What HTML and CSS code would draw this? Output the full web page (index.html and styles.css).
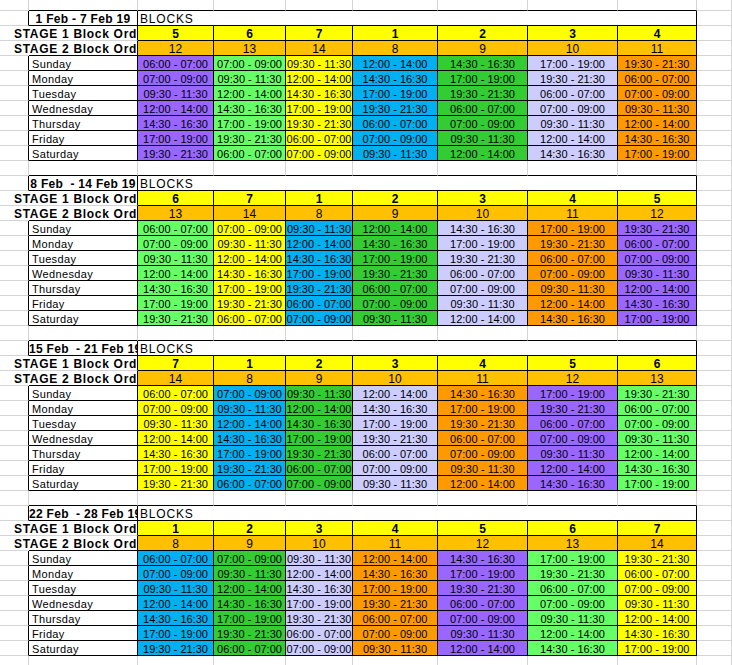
FILE: index.html
```html
<!DOCTYPE html>
<html>
<head>
<meta charset="utf-8">
<title>Block schedule</title>
<link rel="stylesheet" href="styles.css">
</head>
<body>
<table class="sheet">
<colgroup>
<col class="ca"><col class="cb"><col class="cc"><col class="cd"><col class="ce"><col class="cf"><col class="cg"><col class="ch"><col class="ci"><col class="cj">
</colgroup>
<tbody>
<tr class="r0"><td></td><td class="bb"></td><td class="bb"></td><td class="bb"></td><td class="bb"></td><td class="bb"></td><td class="bb"></td><td class="bb"></td><td class="bb"></td><td></td></tr>

<tr><td class="br"></td><td class="box ttl">1 Feb - 7 Feb 19</td><td class="box blk" colspan="7">BLOCKS</td><td></td></tr>
<tr><td class="lblcell"><div class="lbl">STAGE 1 Block Ord</div></td><td class="br"></td><td class="box st1">5</td><td class="box st1">6</td><td class="box st1">7</td><td class="box st1">1</td><td class="box st1">2</td><td class="box st1">3</td><td class="box st1">4</td><td></td></tr>
<tr><td class="lblcell"><div class="lbl">STAGE 2 Block Ord</div></td><td class="box"></td><td class="box st2">12</td><td class="box st2">13</td><td class="box st2">14</td><td class="box st2">8</td><td class="box st2">9</td><td class="box st2">10</td><td class="box st2">11</td><td></td></tr>
<tr><td class="br"></td><td class="box day">Sunday</td><td class="box t k5">06:00 - 07:00</td><td class="box t k6">07:00 - 09:00</td><td class="box t k7">09:30 - 11:30</td><td class="box t k1">12:00 - 14:00</td><td class="box t k2">14:30 - 16:30</td><td class="box t k3">17:00 - 19:00</td><td class="box t k4">19:30 - 21:30</td><td></td></tr>
<tr><td class="br"></td><td class="box day">Monday</td><td class="box t k5">07:00 - 09:00</td><td class="box t k6">09:30 - 11:30</td><td class="box t k7">12:00 - 14:00</td><td class="box t k1">14:30 - 16:30</td><td class="box t k2">17:00 - 19:00</td><td class="box t k3">19:30 - 21:30</td><td class="box t k4">06:00 - 07:00</td><td></td></tr>
<tr><td class="br"></td><td class="box day">Tuesday</td><td class="box t k5">09:30 - 11:30</td><td class="box t k6">12:00 - 14:00</td><td class="box t k7">14:30 - 16:30</td><td class="box t k1">17:00 - 19:00</td><td class="box t k2">19:30 - 21:30</td><td class="box t k3">06:00 - 07:00</td><td class="box t k4">07:00 - 09:00</td><td></td></tr>
<tr><td class="br"></td><td class="box day">Wednesday</td><td class="box t k5">12:00 - 14:00</td><td class="box t k6">14:30 - 16:30</td><td class="box t k7">17:00 - 19:00</td><td class="box t k1">19:30 - 21:30</td><td class="box t k2">06:00 - 07:00</td><td class="box t k3">07:00 - 09:00</td><td class="box t k4">09:30 - 11:30</td><td></td></tr>
<tr><td class="br"></td><td class="box day">Thursday</td><td class="box t k5">14:30 - 16:30</td><td class="box t k6">17:00 - 19:00</td><td class="box t k7">19:30 - 21:30</td><td class="box t k1">06:00 - 07:00</td><td class="box t k2">07:00 - 09:00</td><td class="box t k3">09:30 - 11:30</td><td class="box t k4">12:00 - 14:00</td><td></td></tr>
<tr><td class="br"></td><td class="box day">Friday</td><td class="box t k5">17:00 - 19:00</td><td class="box t k6">19:30 - 21:30</td><td class="box t k7">06:00 - 07:00</td><td class="box t k1">07:00 - 09:00</td><td class="box t k2">09:30 - 11:30</td><td class="box t k3">12:00 - 14:00</td><td class="box t k4">14:30 - 16:30</td><td></td></tr>
<tr><td class="br"></td><td class="box day">Saturday</td><td class="box t k5">19:30 - 21:30</td><td class="box t k6">06:00 - 07:00</td><td class="box t k7">07:00 - 09:00</td><td class="box t k1">09:30 - 11:30</td><td class="box t k2">12:00 - 14:00</td><td class="box t k3">14:30 - 16:30</td><td class="box t k4">17:00 - 19:00</td><td></td></tr>
<tr><td></td><td class="bb"></td><td class="bb"></td><td class="bb"></td><td class="bb"></td><td class="bb"></td><td class="bb"></td><td class="bb"></td><td class="bb"></td><td></td></tr>

<tr><td class="br"></td><td class="box ttl">8 Feb  - 14 Feb 19</td><td class="box blk" colspan="7">BLOCKS</td><td></td></tr>
<tr><td class="lblcell"><div class="lbl">STAGE 1 Block Ord</div></td><td class="br"></td><td class="box st1">6</td><td class="box st1">7</td><td class="box st1">1</td><td class="box st1">2</td><td class="box st1">3</td><td class="box st1">4</td><td class="box st1">5</td><td></td></tr>
<tr><td class="lblcell"><div class="lbl">STAGE 2 Block Ord</div></td><td class="box"></td><td class="box st2">13</td><td class="box st2">14</td><td class="box st2">8</td><td class="box st2">9</td><td class="box st2">10</td><td class="box st2">11</td><td class="box st2">12</td><td></td></tr>
<tr><td class="br"></td><td class="box day">Sunday</td><td class="box t k6">06:00 - 07:00</td><td class="box t k7">07:00 - 09:00</td><td class="box t k1">09:30 - 11:30</td><td class="box t k2">12:00 - 14:00</td><td class="box t k3">14:30 - 16:30</td><td class="box t k4">17:00 - 19:00</td><td class="box t k5">19:30 - 21:30</td><td></td></tr>
<tr><td class="br"></td><td class="box day">Monday</td><td class="box t k6">07:00 - 09:00</td><td class="box t k7">09:30 - 11:30</td><td class="box t k1">12:00 - 14:00</td><td class="box t k2">14:30 - 16:30</td><td class="box t k3">17:00 - 19:00</td><td class="box t k4">19:30 - 21:30</td><td class="box t k5">06:00 - 07:00</td><td></td></tr>
<tr><td class="br"></td><td class="box day">Tuesday</td><td class="box t k6">09:30 - 11:30</td><td class="box t k7">12:00 - 14:00</td><td class="box t k1">14:30 - 16:30</td><td class="box t k2">17:00 - 19:00</td><td class="box t k3">19:30 - 21:30</td><td class="box t k4">06:00 - 07:00</td><td class="box t k5">07:00 - 09:00</td><td></td></tr>
<tr><td class="br"></td><td class="box day">Wednesday</td><td class="box t k6">12:00 - 14:00</td><td class="box t k7">14:30 - 16:30</td><td class="box t k1">17:00 - 19:00</td><td class="box t k2">19:30 - 21:30</td><td class="box t k3">06:00 - 07:00</td><td class="box t k4">07:00 - 09:00</td><td class="box t k5">09:30 - 11:30</td><td></td></tr>
<tr><td class="br"></td><td class="box day">Thursday</td><td class="box t k6">14:30 - 16:30</td><td class="box t k7">17:00 - 19:00</td><td class="box t k1">19:30 - 21:30</td><td class="box t k2">06:00 - 07:00</td><td class="box t k3">07:00 - 09:00</td><td class="box t k4">09:30 - 11:30</td><td class="box t k5">12:00 - 14:00</td><td></td></tr>
<tr><td class="br"></td><td class="box day">Friday</td><td class="box t k6">17:00 - 19:00</td><td class="box t k7">19:30 - 21:30</td><td class="box t k1">06:00 - 07:00</td><td class="box t k2">07:00 - 09:00</td><td class="box t k3">09:30 - 11:30</td><td class="box t k4">12:00 - 14:00</td><td class="box t k5">14:30 - 16:30</td><td></td></tr>
<tr><td class="br"></td><td class="box day">Saturday</td><td class="box t k6">19:30 - 21:30</td><td class="box t k7">06:00 - 07:00</td><td class="box t k1">07:00 - 09:00</td><td class="box t k2">09:30 - 11:30</td><td class="box t k3">12:00 - 14:00</td><td class="box t k4">14:30 - 16:30</td><td class="box t k5">17:00 - 19:00</td><td></td></tr>
<tr><td></td><td class="bb"></td><td class="bb"></td><td class="bb"></td><td class="bb"></td><td class="bb"></td><td class="bb"></td><td class="bb"></td><td class="bb"></td><td></td></tr>

<tr><td class="br"></td><td class="box ttl">15 Feb  - 21 Feb 19</td><td class="box blk" colspan="7">BLOCKS</td><td></td></tr>
<tr><td class="lblcell"><div class="lbl">STAGE 1 Block Ord</div></td><td class="br"></td><td class="box st1">7</td><td class="box st1">1</td><td class="box st1">2</td><td class="box st1">3</td><td class="box st1">4</td><td class="box st1">5</td><td class="box st1">6</td><td></td></tr>
<tr><td class="lblcell"><div class="lbl">STAGE 2 Block Ord</div></td><td class="box"></td><td class="box st2">14</td><td class="box st2">8</td><td class="box st2">9</td><td class="box st2">10</td><td class="box st2">11</td><td class="box st2">12</td><td class="box st2">13</td><td></td></tr>
<tr><td class="br"></td><td class="box day">Sunday</td><td class="box t k7">06:00 - 07:00</td><td class="box t k1">07:00 - 09:00</td><td class="box t k2">09:30 - 11:30</td><td class="box t k3">12:00 - 14:00</td><td class="box t k4">14:30 - 16:30</td><td class="box t k5">17:00 - 19:00</td><td class="box t k6">19:30 - 21:30</td><td></td></tr>
<tr><td class="br"></td><td class="box day">Monday</td><td class="box t k7">07:00 - 09:00</td><td class="box t k1">09:30 - 11:30</td><td class="box t k2">12:00 - 14:00</td><td class="box t k3">14:30 - 16:30</td><td class="box t k4">17:00 - 19:00</td><td class="box t k5">19:30 - 21:30</td><td class="box t k6">06:00 - 07:00</td><td></td></tr>
<tr><td class="br"></td><td class="box day">Tuesday</td><td class="box t k7">09:30 - 11:30</td><td class="box t k1">12:00 - 14:00</td><td class="box t k2">14:30 - 16:30</td><td class="box t k3">17:00 - 19:00</td><td class="box t k4">19:30 - 21:30</td><td class="box t k5">06:00 - 07:00</td><td class="box t k6">07:00 - 09:00</td><td></td></tr>
<tr><td class="br"></td><td class="box day">Wednesday</td><td class="box t k7">12:00 - 14:00</td><td class="box t k1">14:30 - 16:30</td><td class="box t k2">17:00 - 19:00</td><td class="box t k3">19:30 - 21:30</td><td class="box t k4">06:00 - 07:00</td><td class="box t k5">07:00 - 09:00</td><td class="box t k6">09:30 - 11:30</td><td></td></tr>
<tr><td class="br"></td><td class="box day">Thursday</td><td class="box t k7">14:30 - 16:30</td><td class="box t k1">17:00 - 19:00</td><td class="box t k2">19:30 - 21:30</td><td class="box t k3">06:00 - 07:00</td><td class="box t k4">07:00 - 09:00</td><td class="box t k5">09:30 - 11:30</td><td class="box t k6">12:00 - 14:00</td><td></td></tr>
<tr><td class="br"></td><td class="box day">Friday</td><td class="box t k7">17:00 - 19:00</td><td class="box t k1">19:30 - 21:30</td><td class="box t k2">06:00 - 07:00</td><td class="box t k3">07:00 - 09:00</td><td class="box t k4">09:30 - 11:30</td><td class="box t k5">12:00 - 14:00</td><td class="box t k6">14:30 - 16:30</td><td></td></tr>
<tr><td class="br"></td><td class="box day">Saturday</td><td class="box t k7">19:30 - 21:30</td><td class="box t k1">06:00 - 07:00</td><td class="box t k2">07:00 - 09:00</td><td class="box t k3">09:30 - 11:30</td><td class="box t k4">12:00 - 14:00</td><td class="box t k5">14:30 - 16:30</td><td class="box t k6">17:00 - 19:00</td><td></td></tr>
<tr><td></td><td class="bb"></td><td class="bb"></td><td class="bb"></td><td class="bb"></td><td class="bb"></td><td class="bb"></td><td class="bb"></td><td class="bb"></td><td></td></tr>

<tr><td class="br"></td><td class="box ttl">22 Feb  - 28 Feb 19</td><td class="box blk" colspan="7">BLOCKS</td><td></td></tr>
<tr><td class="lblcell"><div class="lbl">STAGE 1 Block Ord</div></td><td class="br"></td><td class="box st1">1</td><td class="box st1">2</td><td class="box st1">3</td><td class="box st1">4</td><td class="box st1">5</td><td class="box st1">6</td><td class="box st1">7</td><td></td></tr>
<tr><td class="lblcell"><div class="lbl">STAGE 2 Block Ord</div></td><td class="box"></td><td class="box st2">8</td><td class="box st2">9</td><td class="box st2">10</td><td class="box st2">11</td><td class="box st2">12</td><td class="box st2">13</td><td class="box st2">14</td><td></td></tr>
<tr><td class="br"></td><td class="box day">Sunday</td><td class="box t k1">06:00 - 07:00</td><td class="box t k2">07:00 - 09:00</td><td class="box t k3">09:30 - 11:30</td><td class="box t k4">12:00 - 14:00</td><td class="box t k5">14:30 - 16:30</td><td class="box t k6">17:00 - 19:00</td><td class="box t k7">19:30 - 21:30</td><td></td></tr>
<tr><td class="br"></td><td class="box day">Monday</td><td class="box t k1">07:00 - 09:00</td><td class="box t k2">09:30 - 11:30</td><td class="box t k3">12:00 - 14:00</td><td class="box t k4">14:30 - 16:30</td><td class="box t k5">17:00 - 19:00</td><td class="box t k6">19:30 - 21:30</td><td class="box t k7">06:00 - 07:00</td><td></td></tr>
<tr><td class="br"></td><td class="box day">Tuesday</td><td class="box t k1">09:30 - 11:30</td><td class="box t k2">12:00 - 14:00</td><td class="box t k3">14:30 - 16:30</td><td class="box t k4">17:00 - 19:00</td><td class="box t k5">19:30 - 21:30</td><td class="box t k6">06:00 - 07:00</td><td class="box t k7">07:00 - 09:00</td><td></td></tr>
<tr><td class="br"></td><td class="box day">Wednesday</td><td class="box t k1">12:00 - 14:00</td><td class="box t k2">14:30 - 16:30</td><td class="box t k3">17:00 - 19:00</td><td class="box t k4">19:30 - 21:30</td><td class="box t k5">06:00 - 07:00</td><td class="box t k6">07:00 - 09:00</td><td class="box t k7">09:30 - 11:30</td><td></td></tr>
<tr><td class="br"></td><td class="box day">Thursday</td><td class="box t k1">14:30 - 16:30</td><td class="box t k2">17:00 - 19:00</td><td class="box t k3">19:30 - 21:30</td><td class="box t k4">06:00 - 07:00</td><td class="box t k5">07:00 - 09:00</td><td class="box t k6">09:30 - 11:30</td><td class="box t k7">12:00 - 14:00</td><td></td></tr>
<tr><td class="br"></td><td class="box day">Friday</td><td class="box t k1">17:00 - 19:00</td><td class="box t k2">19:30 - 21:30</td><td class="box t k3">06:00 - 07:00</td><td class="box t k4">07:00 - 09:00</td><td class="box t k5">09:30 - 11:30</td><td class="box t k6">12:00 - 14:00</td><td class="box t k7">14:30 - 16:30</td><td></td></tr>
<tr><td class="br"></td><td class="box day">Saturday</td><td class="box t k1">19:30 - 21:30</td><td class="box t k2">06:00 - 07:00</td><td class="box t k3">07:00 - 09:00</td><td class="box t k4">09:30 - 11:30</td><td class="box t k5">12:00 - 14:00</td><td class="box t k6">14:30 - 16:30</td><td class="box t k7">17:00 - 19:00</td><td></td></tr>
<tr><td></td><td></td><td></td><td></td><td></td><td></td><td></td><td></td><td></td><td></td></tr>
</tbody>
</table>
</body>
</html>
```
FILE: styles.css
```css
html, body {
  margin: 0;
  padding: 0;
  background: #ffffff;
  overflow: hidden;
}

.sheet {
  border-collapse: separate;
  border-spacing: 0;
  table-layout: fixed;
  width: 732px;
  font-family: "Liberation Sans", Arial, sans-serif;
  font-size: 11px;
  color: #000000;
}

.ca { width: 29px; }
.cb { width: 109px; }
.cc { width: 76px; }
.cd { width: 72px; }
.ce { width: 67px; }
.cf { width: 85px; }
.cg { width: 90px; }
.ch { width: 90px; }
.ci { width: 79px; }
.cj { width: 35px; }

.sheet tr { height: 15px; }
.sheet tr.r0 { height: 11px; }

.sheet td {
  padding: 2px 0 0 0;
  line-height: 12px;
  border-right: 1px solid #d4d4d4;
  border-bottom: 1px solid #d4d4d4;
  white-space: pre;
  overflow: hidden;
  vertical-align: top;
}

.sheet td.br { border-right-color: #000000; }
.sheet td.bb { border-bottom-color: #000000; }
.sheet td.box {
  border-right-color: #000000;
  border-bottom-color: #000000;
}

.sheet td.ttl {
  font-weight: bold;
  font-size: 12px;
  letter-spacing: 0.3px;
  text-align: center;
}

.sheet td.blk {
  font-size: 12px;
  letter-spacing: 0.8px;
  padding-left: 2px;
  text-align: left;
}

.sheet td.lblcell {
  overflow: visible;
  border-right-color: #ffffff;
}

.lbl {
  width: 123px;
  margin-left: 14px;
  overflow: hidden;
  font-weight: bold;
  font-size: 12px;
  letter-spacing: 0.7px;
  white-space: pre;
}

.sheet td.st1 {
  background: #ffff00;
  font-weight: bold;
  font-size: 12px;
  text-align: center;
}

.sheet td.st2 {
  background: #ffc000;
  font-size: 12px;
  text-align: center;
}

.sheet td.day {
  padding-left: 3px;
  letter-spacing: 0.35px;
  text-align: left;
}

.sheet td.t { text-align: center; }

.k1 { background: #00b0f0; }
.k2 { background: #33cc33; }
.k3 { background: #ccccff; }
.k4 { background: #ff9900; }
.k5 { background: #9966ff; }
.k6 { background: #66ff66; }
.k7 { background: #ffff00; }
```
